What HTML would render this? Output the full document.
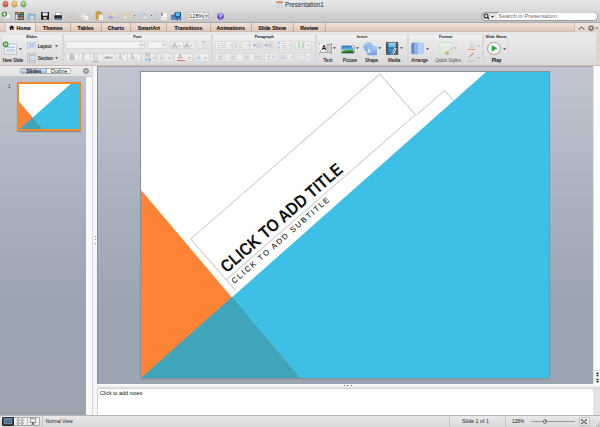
<!DOCTYPE html>
<html><head><meta charset="utf-8">
<style>
*{margin:0;padding:0;box-sizing:border-box}
html,body{width:600px;height:427px;overflow:hidden;background:#e4e4e4;font-family:"Liberation Sans",sans-serif;position:relative}
.a{position:absolute}
#top{left:0;top:0;width:600px;height:23.2px;background:linear-gradient(#e9e9e9,#d6d6d6 55%,#c4c4c4)}
#top:after{content:"";position:absolute;left:0;right:0;bottom:0;height:0.8px;background:#a8a8a8}
.tl{width:5.6px;height:5.6px;border-radius:50%;top:1.4px;box-shadow:0 0 0 0.4px rgba(0,0,0,.25)}
#tabs{left:0;top:23.2px;width:600px;height:8.8px;background:linear-gradient(#eee0d7,#dfcabe);border-bottom:0.5px solid #d2bcaf}
.tab{top:0;height:9px;font-size:5.2px;font-weight:bold;color:#111;text-align:center;line-height:10px;border-right:0.8px solid #c4aea2;-webkit-text-stroke:0.12px #111}
#rib{left:0;top:32px;width:597px;height:33px;background:linear-gradient(#e8e8e8,#dedede)}
#ribb{left:0;top:65px;width:600px;height:1px;background:#d5beb1}
.grp{top:1.5px;height:31px;border:0.6px solid #d9d9d9;border-top-color:#e4e4e4;border-radius:1px;background:linear-gradient(#e9e9e9 15%,#e4e4e4 45%,#dbdbdb)}
.glab{top:0;height:5.2px;width:100%;text-align:center;font-size:3.9px;font-weight:bold;line-height:3.1px;color:#1a1a1a;background:linear-gradient(#f2f2f2,#ececec)}
.lab{font-size:4.6px;color:#1a1a1a;white-space:nowrap;line-height:5px;-webkit-text-stroke:0.1px #1a1a1a}
.arr{width:2.6px;height:2px;border-top:2px solid #2a2a2a;clip-path:polygon(0 0,100% 0,50% 100%)}
.btn{border:0.6px solid #dcdcdc;border-radius:1px;background:linear-gradient(#f0f0f0,#e8e8e8)}
#lhead{left:0;top:66px;width:92px;height:10.5px;background:linear-gradient(#ececec,#e2e2e2);border-bottom:1px solid #c9c9c9}
#lpane{left:0;top:76.5px;width:86px;height:338px;background:linear-gradient(rgb(189,195,207) 0%,rgb(170,177,190) 36.5%,rgb(155,164,177) 67.6%,rgb(155,164,176) 100%)}
#lscroll{left:86px;top:76.5px;width:6px;height:338px;background:#fafafa}
#split{left:92px;top:66px;width:5px;height:349px;background:#f7f7f7;border-left:1px solid #d9d9d9}
#main{left:97px;top:66px;width:496px;height:318px;background:linear-gradient(rgb(192,197,209) 0%,rgb(170,177,190) 42%,rgb(155,164,177) 75%,rgb(155,164,177) 100%);border-left:1px solid #8a8f97;border-top:1px solid #9ea4ae}
#vscroll{left:593px;top:66px;width:7px;height:318px;background:#fbfbfb;border-left:1px solid #e2e2e2}
#nsplit{left:97px;top:384px;width:503px;height:4.6px;background:linear-gradient(#fdfdfd,#f2f2f2 50%,#dedede);border-bottom:0.6px solid #d4d4d4}
#notes{left:97px;top:388.6px;width:497px;height:27px;background:#fff;border-left:1px solid #cfcfcf;border-right:1px solid #e4e4e4}
#status{left:0;top:414.5px;width:600px;height:12.5px;background:linear-gradient(#e9e9e9,#d9d9d9);border-top:1px solid #b5b5b5}
#slide{left:141px;top:72px;width:408px;height:306px;background:#fff;box-shadow:0 0 0 1px #8a8f98, 0.5px 1px 1.5px rgba(0,0,0,.25)}
.ti{top:11px;width:9px;height:9px}
</style></head><body>

<!-- ===== title bar + toolbar ===== -->
<div id="top" class="a">
  <div class="a tl" style="left:2.7px;background:radial-gradient(circle at 50% 35%,#f59a90,#d2473e 60%,#a8332c)"></div>
  <div class="a tl" style="left:11.7px;background:radial-gradient(circle at 50% 35%,#f7dc9a,#d9a33a 60%,#a87a20)"></div>
  <div class="a tl" style="left:20.7px;background:radial-gradient(circle at 50% 35%,#bfe8a8,#68b04c 60%,#3f8430)"></div>
  <svg class="a" style="left:275.8px;top:1.2px" width="7.5" height="7"><rect x="0.4" y="0.4" width="6.6" height="6" rx="0.8" fill="#eef0f2" stroke="#b0a8a0" stroke-width="0.5"/><rect x="0.6" y="0.6" width="6.2" height="1.6" fill="#e07848"/><rect x="1.6" y="3" width="4.2" height="2.4" fill="#c8d4e0"/></svg>
  <div class="a" style="left:285px;top:0.7px;font-size:6.3px;color:#2a2a2a;line-height:8px">Presentation1</div>

  <!-- new -->
  <svg class="a" style="left:1px;top:10.5px" width="11" height="10">
    <path d="M2.2 2.2 H7.6 L9.4 4 V9.5 H2.2 Z" fill="#f6f6f6" stroke="#a8a8a8" stroke-width="0.5"/>
    <rect x="2.6" y="6.6" width="6.5" height="2.6" fill="#d4d4d4"/>
    <circle cx="3.5" cy="3.1" r="2.6" fill="#3d9a2e"/>
    <path d="M3.5 1.5 V4.7 M1.9 3.1 H5.1" stroke="#fff" stroke-width="0.9"/>
  </svg>
  <!-- templates -->
  <svg class="a" style="left:14.5px;top:11.8px" width="9" height="8">
    <rect x="0" y="0" width="9" height="8" fill="#3a3f47" stroke="#8a8a8a" stroke-width="0.4"/>
    <rect x="0.5" y="0.4" width="2.4" height="1.6" fill="#d8503a"/><rect x="3.1" y="0.4" width="2.4" height="1.6" fill="#e8a030"/><rect x="5.7" y="0.4" width="2.8" height="1.6" fill="#4a9a3a"/>
    <rect x="0.5" y="2.3" width="2.2" height="5.3" fill="#cfe2f2"/>
    <circle cx="4.2" cy="3.7" r="0.9" fill="#3ab0e8"/><circle cx="7" cy="3.7" r="0.9" fill="#5ad890"/>
    <rect x="3" y="5.4" width="5.4" height="1.5" fill="#f08a5a"/>
  </svg>
  <!-- open -->
  <svg class="a" style="left:27.3px;top:11.8px" width="9.5" height="8.5">
    <path d="M0.5 1.2 H3.5 L4.3 2 H9 V7.4 H0.5 Z" fill="#7fb0d6"/>
    <path d="M0.5 2.8 H9 V7.4 H0.5 Z" fill="#93c0e2"/>
    <path d="M5 8.3 V4.2 M3.8 5.4 L5 4.2 L6.2 5.4" stroke="#fff" stroke-width="0.9" fill="none"/>
  </svg>
  <!-- save -->
  <svg class="a" style="left:40.8px;top:11.8px" width="8.5" height="8">
    <rect x="0" y="0" width="8.2" height="7.8" rx="0.5" fill="#1c1c1c"/>
    <rect x="1.6" y="0.5" width="5" height="3.2" fill="#f2f2f2"/><rect x="1.6" y="0.5" width="5" height="0.7" fill="#5a7ab8"/>
    <rect x="2.3" y="5" width="3.6" height="2.6" fill="#b8b8b8"/>
  </svg>
  <!-- print -->
  <svg class="a" style="left:53.5px;top:11.5px" width="8.5" height="8.5">
    <rect x="1.5" y="0.5" width="5.5" height="3" fill="#f8f8f8" stroke="#888" stroke-width="0.4"/>
    <rect x="0.3" y="3.3" width="7.9" height="3.2" rx="0.6" fill="#2a2a2a"/>
    <rect x="0.8" y="6.3" width="6.9" height="1.8" fill="#6a6a6a"/>
    <rect x="2.2" y="6.6" width="4.2" height="1.4" fill="#3a8ad8"/>
  </svg>
  <div class="a" style="left:65.5px;top:11px;width:0.8px;height:10px;background:#cfcfcf"></div>
  <!-- cut (faded) -->
  <svg class="a" style="left:69px;top:12px" width="9" height="8"><path d="M2.5 0.5 L5.5 5 M6.5 0.5 L3.5 5" stroke="#c8c8c8" stroke-width="0.7" fill="none"/><circle cx="2.8" cy="6" r="1.3" fill="none" stroke="#e2c4bc" stroke-width="0.9"/><circle cx="6.2" cy="6" r="1.3" fill="none" stroke="#e2c4bc" stroke-width="0.9"/></svg>
  <!-- copy (faded) -->
  <svg class="a" style="left:81px;top:12.5px" width="9" height="8"><rect x="0.5" y="0.5" width="4.5" height="5" fill="#ececec" stroke="#d2d2d2" stroke-width="0.6"/><rect x="3" y="2.5" width="4.5" height="5" fill="#f0f0f0" stroke="#d2d2d2" stroke-width="0.6"/></svg>
  <!-- paste -->
  <svg class="a" style="left:94.5px;top:11px" width="10" height="10">
    <rect x="0.7" y="0.8" width="5.6" height="7.6" rx="0.5" fill="#c98a1c"/>
    <rect x="1.3" y="1.2" width="4.4" height="6.8" fill="#e0a22e"/>
    <rect x="2.2" y="0.2" width="2.6" height="1.3" fill="#9a9a9a"/>
    <rect x="3.6" y="3.6" width="5" height="5.8" fill="#f8f8f8" stroke="#a8a8a8" stroke-width="0.5"/>
    <path d="M4.6 5 H7.6 M4.6 6.3 H7.6 M4.6 7.6 H7" stroke="#ccc" stroke-width="0.4"/>
  </svg>
  <!-- format painter (faded) -->
  <svg class="a" style="left:107px;top:11.5px" width="10" height="9"><path d="M0.8 5.2 L4.8 7.6 L7.2 5.2 L3.2 3 Z" fill="#b0a8e0"/><path d="M3.2 3 L7.2 5.2 L8.5 2.2 L5.2 0.8 Z" fill="#ead9a8"/><path d="M5.2 0.8 L8.5 2.2" stroke="#e8e8e8" stroke-width="0.6"/></svg>
  <div class="a" style="left:119px;top:11px;width:0.8px;height:10px;background:#cfcfcf"></div>
  <!-- undo -->
  <svg class="a" style="left:122px;top:12px" width="10" height="8"><path d="M3.2 6.6 A3.7 2.9 0 1 1 8 6" stroke="#e6d49a" stroke-width="1.8" fill="none"/><path d="M2 4.6 L3.6 7.2 L5 5.4 Z" fill="#f2eef6"/></svg>
  <div class="a" style="left:133.7px;top:15px;width:1.4px;height:1.1px;background:#555"></div>
  <!-- redo -->
  <svg class="a" style="left:139.3px;top:12px" width="10" height="8"><path d="M6.8 6.6 A3.7 2.9 0 1 0 2 6" stroke="#b4cfe2" stroke-width="1.8" fill="none"/><path d="M8 4.6 L6.4 7.2 L5 5.4 Z" fill="#f2f6fa"/></svg>
  <div class="a" style="left:150.8px;top:15px;width:1.4px;height:1.1px;background:#555"></div>
  <div class="a" style="left:155px;top:11px;width:0.8px;height:10px;background:#cfcfcf"></div>
  <!-- new slide doc -->
  <svg class="a" style="left:159.5px;top:11.5px" width="8" height="9">
    <rect x="0.6" y="0.6" width="6.6" height="7.6" fill="#f6f6f6" stroke="#c4c4c4" stroke-width="0.5"/>
    <rect x="1" y="1" width="1.7" height="1.6" fill="#d8402c"/><rect x="1" y="2.8" width="1.7" height="1.4" fill="#6aa0d8"/>
    <rect x="1" y="5.2" width="5.8" height="2.6" fill="#e4e4e4"/>
  </svg>
  <!-- slideshow -->
  <svg class="a" style="left:170.5px;top:11.5px" width="11" height="9">
    <rect x="0.5" y="3" width="5" height="4.4" fill="#4a84d0" stroke="#2a5aa0" stroke-width="0.4"/>
    <rect x="3.6" y="0.4" width="6.4" height="4.2" fill="#1e2a34"/>
    <rect x="4.6" y="0.9" width="4.4" height="3.2" fill="#4cc0f0"/>
    <path d="M5.5 4.6 H9.8 V8.4 H8.6 V6.4 H7 V8.4 H5.5 Z" fill="#2050a8"/>
  </svg>
  <!-- zoom -->
  <div class="a" style="left:188px;top:12.2px;width:21px;height:7.5px;background:#fff;border:0.6px solid #c8c8c8"></div>
  <div class="a" style="left:203px;top:12.2px;width:6px;height:7.5px;background:linear-gradient(#eee,#d4d4d4);border:0.6px solid #c0c0c0"></div>
  <svg class="a" style="left:204.5px;top:15.1px" width="3" height="2.4"><path d="M0.2 0.2 H2.8 L1.5 2 Z" fill="#555"/></svg>
  <div class="a" style="left:189.3px;top:12.6px;font-size:5.5px;line-height:7px;color:#222">128%</div>
  <!-- help -->
  <svg class="a" style="left:215.5px;top:11.5px" width="9" height="9">
    <defs><radialGradient id="hlp" cx="0.5" cy="0.35" r="0.6"><stop offset="0" stop-color="#a08cff"/><stop offset="1" stop-color="#5330c4"/></radialGradient></defs>
    <circle cx="4.5" cy="4.4" r="4.1" fill="#eeeeee" stroke="#b8b8b8" stroke-width="0.4"/>
    <circle cx="4.5" cy="4.4" r="3.3" fill="url(#hlp)"/>
    <path d="M3.3 3.3 Q3.4 2.2 4.5 2.2 Q5.7 2.2 5.7 3.3 Q5.7 4 4.8 4.5 L4.6 5.3" stroke="#fff" stroke-width="0.8" fill="none"/>
    <circle cx="4.6" cy="6.4" r="0.45" fill="#fff"/>
  </svg>
  <!-- search -->
  <div class="a" style="left:480.5px;top:11.5px;width:117px;height:9px;border-radius:4.5px;background:linear-gradient(#d8d8d8,#f2f2f2);border:0.7px solid #9a9a9a"></div>
  <div class="a" style="left:496px;top:12.3px;width:101px;height:7.4px;border-radius:3.7px;background:#fff;box-shadow:inset 0 0.5px 1px rgba(0,0,0,.35)"></div>
  <svg class="a" style="left:483px;top:12.8px" width="12" height="7"><circle cx="3" cy="3" r="2" stroke="#222" stroke-width="1.1" fill="none"/><path d="M4.4 4.4 L6 6" stroke="#222" stroke-width="1.3"/><path d="M8 3 L11 3 L9.5 5 Z" fill="#333"/></svg>
  <div class="a" style="left:498.3px;top:13px;font-size:5.8px;line-height:7px;color:#6a6a6a">Search in Presentation</div>
</div>

<!-- ===== tabs ===== -->
<div id="tabs" class="a">
  <div class="a tab" style="left:4.75px;width:31.5px;background:linear-gradient(#f3eeeb,#ebe3de);border-left:1px solid #d4c6be"></div>
  <svg class="a" style="left:9.2px;top:2.2px" width="5.5" height="5"><path d="M2.75 0.2 L5.4 2.7 L4.6 2.7 L4.6 4.9 L3.3 4.9 L3.3 3.6 L2.2 3.6 L2.2 4.9 L0.9 4.9 L0.9 2.7 L0.1 2.7 Z" fill="#111"/></svg>
  <div class="a tab" style="left:16.5px;width:15px;border:none;text-align:left">Home</div>
  <div class="a tab" style="left:36.25px;width:34.35px">Themes</div>
  <div class="a tab" style="left:70.6px;width:31.1px">Tables</div>
  <div class="a tab" style="left:101.7px;width:29.6px">Charts</div>
  <div class="a tab" style="left:131.3px;width:36px">SmartArt</div>
  <div class="a tab" style="left:167.3px;width:43.3px">Transitions</div>
  <div class="a tab" style="left:210.6px;width:41.2px">Animations</div>
  <div class="a tab" style="left:251.8px;width:41.8px">Slide Show</div>
  <div class="a tab" style="left:293.6px;width:32.1px">Review</div>
  <div class="a" style="left:574px;top:0;width:26px;height:8.8px;background:linear-gradient(#f0e4dc,#e4d2c8);border-left:0.8px solid #d0bcb0"></div>
  <svg class="a" style="left:577.5px;top:2.6px" width="7" height="4.5"><path d="M0.7 3.6 L3.5 1 L6.3 3.6" stroke="#444" stroke-width="1" fill="none"/></svg>
  
  <svg class="a" style="left:588px;top:1.6px" width="12" height="7"><circle cx="3.2" cy="3.2" r="2.8" fill="none" stroke="#666" stroke-width="1" stroke-dasharray="0.9 0.8"/><circle cx="3.2" cy="3.2" r="1.7" fill="none" stroke="#666" stroke-width="1.1"/><path d="M7.6 2.6 L10 2.6 L8.8 4 Z" fill="#444"/></svg>
</div>

<!-- ===== ribbon ===== -->
<div id="rib" class="a">
  <div class="a grp" style="left:1px;width:61.5px"><div class="a glab">Slides</div></div>
  <div class="a grp" style="left:62.5px;width:149.8px"><div class="a glab">Font</div></div>
  <div class="a grp" style="left:212.3px;width:104px"><div class="a glab">Paragraph</div></div>
  <div class="a grp" style="left:316.3px;width:91.5px"><div class="a glab">Insert</div></div>
  <div class="a grp" style="left:407.8px;width:75.6px"><div class="a glab">Format</div></div>
  <div class="a grp" style="left:483.4px;width:25px"><div class="a glab">Slide Show</div></div>
  <div class="a grp" style="left:508.4px;width:88.6px;border-left:none"></div>
  
</div>
<div id="ribc" class="a" style="left:0;top:0;width:600px;height:66px">
  <!-- Slides group -->
  <svg class="a" style="left:2px;top:41.2px" width="16" height="14.5">
    <rect x="2.2" y="3" width="12.6" height="10.6" fill="#f6f6f6" stroke="#a8a8a8" stroke-width="0.6"/>
    <rect x="2.6" y="12.6" width="11.8" height="0.8" fill="#d0d0d0"/>
    <rect x="4" y="5.6" width="9.2" height="1" fill="#8fb3e6"/>
    <rect x="4" y="7.6" width="9.2" height="4" fill="#d2e2f6"/>
    <path d="M5 8.6 H12 M5 10.3 H12" stroke="#a4c0ea" stroke-width="0.5"/>
    <circle cx="3.6" cy="3.3" r="2.9" fill="#3b9a2c"/>
    <circle cx="3.6" cy="3.3" r="1.5" fill="#fff"/>
    <path d="M3.6 2.3 V4.3 M2.6 3.3 H4.6" stroke="#3b9a2c" stroke-width="0.6"/>
  </svg>
  <svg class="a" style="left:19.2px;top:47.8px" width="3" height="2.4"><path d="M0.2 0.2 H2.8 L1.5 2 Z" fill="#2a2a2a"/></svg>
  <div class="a lab" style="left:2.7px;top:57.8px;font-size:4.55px">New Slide</div>
  <svg class="a" style="left:26.5px;top:41.8px" width="9.5" height="7.5">
    <rect x="0.5" y="0.5" width="8.5" height="6.6" fill="#e4eefa" stroke="#a8b0bc" stroke-width="0.6"/>
    <rect x="1.6" y="1.6" width="6.3" height="4.4" fill="#c8dcf6"/>
    <path d="M2.2 2.6 H7.2" stroke="#7ea4dc" stroke-width="0.7"/>
    <path d="M2.2 4.2 H7.2 M2.2 5.3 H6" stroke="#a0bde6" stroke-width="0.5"/>
  </svg>
  <div class="a lab" style="left:37.7px;top:43.6px;font-size:4.6px">Layout</div>
  <svg class="a" style="left:54.8px;top:44.8px" width="3" height="2.4"><path d="M0.2 0.2 H2.8 L1.5 2 Z" fill="#2a2a2a"/></svg>
  <svg class="a" style="left:26.5px;top:52.6px" width="9.5" height="10">
    <path d="M0.5 2.2 V0.6 H9 V2.2" fill="none" stroke="#b4b4b4" stroke-width="0.9"/>
    <path d="M0.5 7.6 V9.3 H9 V7.6" fill="none" stroke="#b4b4b4" stroke-width="0.9"/>
    <path d="M0.5 2.2 V7.6" stroke="#c4c4c4" stroke-width="0.9"/>
    <rect x="2.4" y="2.6" width="6.6" height="4.8" fill="#c6daf4" stroke="#98a8c0" stroke-width="0.5"/>
    <path d="M3.4 4.2 H8" stroke="#eef4fc" stroke-width="0.8"/>
  </svg>
  <div class="a lab" style="left:37.7px;top:55.5px;font-size:4.6px">Section</div>
  <svg class="a" style="left:54.8px;top:57.0px" width="3" height="2.4"><path d="M0.2 0.2 H2.8 L1.5 2 Z" fill="#2a2a2a"/></svg>

  <!-- Font group -->
  <div class="a" style="left:65.3px;top:41.3px;width:80px;height:7.5px;border:0.6px solid #dadada;background:#f1f1f1"></div>
  <div class="a" style="left:139.5px;top:41.3px;width:5.8px;height:7.5px;border-left:0.6px solid #dadada"></div>
  <svg class="a" style="left:141.0px;top:44.4px" width="3" height="2.4"><path d="M0.2 0.2 H2.8 L1.5 2 Z" fill="#aaa"/></svg>
  <div class="a" style="left:147px;top:41.3px;width:20.3px;height:7.5px;border:0.6px solid #dadada;background:#f1f1f1"></div>
  <div class="a" style="left:161.5px;top:41.3px;width:5.8px;height:7.5px;border-left:0.6px solid #dadada"></div>
  <svg class="a" style="left:163.0px;top:44.4px" width="3" height="2.4"><path d="M0.2 0.2 H2.8 L1.5 2 Z" fill="#aaa"/></svg>
  <div class="a btn" style="left:169.5px;top:41.3px;width:26.5px;height:7.5px"></div>
  <div class="a" style="left:182.7px;top:41.3px;width:0.6px;height:7.5px;background:#dadada"></div>
  <svg class="a" style="left:170px;top:41.5px" width="26" height="7.5">
    <path d="M2 6.6 L4.6 0.8 L7.2 6.6 M3.1 4.4 H6.1" stroke="#a4a4a4" stroke-width="0.8" fill="none"/>
    <path d="M7.8 4.4 L9.1 2.8 L10.4 4.4 Z" fill="#8fb0dc"/>
    <path d="M14.2 6.6 L16.8 0.8 L19.4 6.6 M15.3 4.4 H18.3" stroke="#a4a4a4" stroke-width="0.8" fill="none"/>
    <path d="M20 3.2 L21.3 4.8 L22.6 3.2 Z" fill="#8fb0dc"/>
  </svg>
  <div class="a btn" style="left:197.5px;top:41.3px;width:12px;height:7.5px"></div>
  <svg class="a" style="left:198.5px;top:41.3px" width="10" height="8">
    <path d="M3 1.2 L5 0.4 L5.6 2" stroke="#9a9a9a" stroke-width="0.6" fill="none"/>
    <path d="M2.6 3.6 L6 1.6 L9 4.6 L5.6 7 Z" fill="#f0f0f4" stroke="#b4b4b8" stroke-width="0.5"/>
    <path d="M4.2 5.4 L7.4 3.2" stroke="#c8c8cc" stroke-width="0.5"/>
  </svg>

  <div class="a btn" style="left:65.5px;top:53.4px;width:75px;height:8.6px"></div>
  <div class="a" style="left:77.5px;top:53.4px;width:0.6px;height:8.6px;background:#dadada"></div>
  <div class="a" style="left:89.5px;top:53.4px;width:0.6px;height:8.6px;background:#dadada"></div>
  <div class="a" style="left:102.5px;top:53.4px;width:0.6px;height:8.6px;background:#dadada"></div>
  <div class="a" style="left:114.5px;top:53.4px;width:0.6px;height:8.6px;background:#dadada"></div>
  <div class="a" style="left:127px;top:53.4px;width:0.6px;height:8.6px;background:#dadada"></div>
  <div class="a" style="left:69.2px;top:53.8px;font-family:'Liberation Serif';font-size:8px;line-height:8px;color:#a8a8a8;font-weight:bold">B</div>
  <div class="a" style="left:81.6px;top:53.8px;font-family:'Liberation Serif';font-size:8px;line-height:8px;color:#a8a8a8;font-style:italic">I</div>
  <div class="a" style="left:92.8px;top:53.6px;font-family:'Liberation Serif';font-size:8px;line-height:8px;color:#a8a8a8;text-decoration:underline">U</div>
  <div class="a" style="left:104.5px;top:55.5px;font-size:3.6px;line-height:4px;color:#999">ABC</div>
  <div class="a" style="left:105px;top:57.4px;width:7.5px;height:0.5px;background:#aaa"></div>
  <div class="a" style="left:117.5px;top:53.8px;font-family:'Liberation Serif';font-size:7.5px;line-height:8px;color:#a8a8a8">A</div>
  <div class="a" style="left:123.3px;top:53.6px;font-size:3px;line-height:3px;color:#8fb0dc">1</div>
  <div class="a" style="left:129.5px;top:53.8px;font-family:'Liberation Serif';font-size:7.5px;line-height:8px;color:#a8a8a8">A</div>
  <div class="a" style="left:135.3px;top:58.5px;font-size:3px;line-height:3px;color:#8fb0dc">2</div>
  <div class="a btn" style="left:142px;top:53.4px;width:13.5px;height:8.6px"></div>
  <div class="a" style="left:144.5px;top:53.6px;font-size:4.5px;line-height:4.5px;color:#aaa;font-weight:bold">AV</div>
  <div class="a" style="left:144.5px;top:58.3px;width:2.5px;height:2.5px;border-radius:50%;background:#8fb6e0"></div>
  <div class="a" style="left:148.3px;top:58.3px;width:2.5px;height:2.5px;border-radius:50%;background:#8fb6e0"></div>
  <svg class="a" style="left:151.8px;top:57.2px" width="3" height="2.4"><path d="M0.2 0.2 H2.8 L1.5 2 Z" fill="#aaa"/></svg>
  <div class="a btn" style="left:157px;top:53.4px;width:15.5px;height:8.6px"></div>
  <div class="a" style="left:159.5px;top:53.8px;font-size:7px;line-height:8px;color:#b8c4d4">A</div>
  <svg class="a" style="left:168.4px;top:57.2px" width="3" height="2.4"><path d="M0.2 0.2 H2.8 L1.5 2 Z" fill="#aaa"/></svg>
  <div class="a btn" style="left:174px;top:53.4px;width:18.5px;height:8.6px"></div>
  <div class="a" style="left:177.8px;top:53.4px;font-size:7px;line-height:8px;color:#a0a0a0">A</div>
  <div class="a" style="left:177px;top:60.3px;width:8px;height:1.2px;background:#e86868"></div>
  <svg class="a" style="left:188.4px;top:57.2px" width="3" height="2.4"><path d="M0.2 0.2 H2.8 L1.5 2 Z" fill="#aaa"/></svg>
  <div class="a btn" style="left:193.5px;top:53.4px;width:15.5px;height:8.6px"></div>
  <div class="a" style="left:195.8px;top:53.6px;font-size:7px;line-height:8px;color:#7fd6d6">A</div>
  <svg class="a" style="left:203.8px;top:57.2px" width="3" height="2.4"><path d="M0.2 0.2 H2.8 L1.5 2 Z" fill="#aaa"/></svg>

  <!-- Paragraph group -->
  <div class="a btn" style="left:214.5px;top:41.3px;width:18px;height:8.4px"></div>
  <div class="a btn" style="left:232.5px;top:41.3px;width:17px;height:8.4px"></div>
  <div class="a btn" style="left:250px;top:41.3px;width:12px;height:8.4px"></div>
  <div class="a btn" style="left:263px;top:41.3px;width:12px;height:8.4px"></div>
  <div class="a btn" style="left:276.5px;top:41.3px;width:15px;height:8.4px"></div>
  <div class="a btn" style="left:294.5px;top:41.3px;width:17.5px;height:8.4px"></div>
  <svg class="a" style="left:214.5px;top:41.3px" width="100" height="9">
    <g fill="#9fbfe0"><circle cx="3.5" cy="2.5" r="0.6"/><circle cx="3.5" cy="4.5" r="0.6"/><circle cx="3.5" cy="6.5" r="0.6"/><rect x="20.5" y="2" width="1" height="5"/><circle cx="39.5" cy="4.2" r="1.6"/><circle cx="51" cy="4.2" r="1.6"/><path d="M64 1 L65.5 3 L62.5 3 Z M64 7.5 L65.5 5.5 L62.5 5.5 Z"/></g>
    <g stroke="#c4c4c4" stroke-width="0.6"><path d="M5 2.5 H11 M5 4.5 H11 M5 6.5 H11 M23 2.5 H28 M23 4.5 H28 M23 6.5 H28 M67 2.5 H72 M67 4.5 H72 M67 6.5 H72"/></g>
    <rect x="41" y="1.5" width="5.5" height="5.5" fill="#d4d4d4"/><rect x="52.5" y="1.5" width="5.5" height="5.5" fill="#d4d4d4"/>
    <rect x="83" y="1.5" width="2.2" height="6" fill="#b8dcb8"/><rect x="87" y="1.5" width="2.2" height="6" fill="#b8dcb8"/>
    <path d="M15 3.7 L17 3.7 L16 4.9 Z M32 3.7 L34 3.7 L33 4.9 Z M74 3.7 L76 3.7 L75 4.9 Z M92.5 3.7 L94.5 3.7 L93.5 4.9 Z" fill="#aaa"/>
  </svg>
  <div class="a btn" style="left:214.5px;top:53.4px;width:49px;height:8.6px"></div>
  <div class="a btn" style="left:264px;top:53.4px;width:12.5px;height:8.6px"></div>
  <div class="a btn" style="left:278.5px;top:53.4px;width:15px;height:8.6px"></div>
  <div class="a btn" style="left:296px;top:53.4px;width:16px;height:8.6px"></div>
  <svg class="a" style="left:214.5px;top:53.4px" width="100" height="9">
    <g stroke="#c6c6c6" stroke-width="0.7"><path d="M3 2 H10 M3 3.5 H8 M3 5 H10 M3 6.5 H8 M15 2 H22 M16 3.5 H21 M15 5 H22 M16 6.5 H21 M27 2 H34 M29 3.5 H34 M27 5 H34 M29 6.5 H34 M39 2 H47 M39 3.5 H47 M39 5 H47 M39 6.5 H47 M52 6.5 H60"/></g>
    <g fill="#9fbfe0"><path d="M52 3.5 L54.5 2 L54.5 5 Z M60 3.5 L57.5 2 L57.5 5 Z"/></g>
    <g stroke="#b0b0b0" stroke-width="0.6"><path d="M66 1.5 V7 M68 1.5 V7 M70.5 1.5 L69 7 M70.5 1.5 L72 7"/></g>
    <rect x="84" y="2" width="7" height="5.5" fill="#dde8f4" stroke="#c8c8c8" stroke-width="0.5"/>
    <path d="M75.5 3.7 L77.5 3.7 L76.5 4.9 Z M92.5 3.7 L94.5 3.7 L93.5 4.9 Z" fill="#aaa"/>
  </svg>

  <!-- Insert group -->
  <div class="a" style="left:319.5px;top:43.5px;width:12.2px;height:9.9px;background:linear-gradient(90deg,#fafafa 0%,#e6e6e6 45%,#c4c4c4 50%,#cfcfcf 100%);border:0.5px solid #a8a8a8"></div>
  <div class="a" style="left:320.2px;top:44.2px;width:6px;height:5.5px;background:#fdfdfd"></div>
  <div class="a" style="left:321.6px;top:43.8px;font-size:6.6px;font-weight:bold;line-height:7.5px;color:#111">A</div>
  <div class="a" style="left:318.7px;top:42.7px;width:1.7px;height:1.7px;border-radius:50%;background:#4b6ff0"></div>
  <div class="a" style="left:330.8px;top:42.7px;width:1.7px;height:1.7px;border-radius:50%;background:#4b6ff0"></div>
  <div class="a" style="left:318.7px;top:52.5px;width:1.7px;height:1.7px;border-radius:50%;background:#4b6ff0"></div>
  <div class="a" style="left:330.8px;top:52.5px;width:1.7px;height:1.7px;border-radius:50%;background:#4b6ff0"></div>
  <svg class="a" style="left:333.1px;top:47.4px" width="3" height="2.4"><path d="M0.2 0.2 H2.8 L1.5 2 Z" fill="#2a2a2a"/></svg>
  <div class="a lab" style="left:323.3px;top:58.0px;font-size:4.9px">Text</div>
  <div class="a" style="left:341px;top:44.5px;width:13.8px;height:9.7px;border:0.5px solid #b0b0b0;border-radius:1.2px;background:linear-gradient(#f6f6f6,#dcdcdc)"></div>
  <svg class="a" style="left:342.2px;top:45.6px" width="11.5" height="7.6">
    <defs><linearGradient id="sky" x1="0" y1="0" x2="0" y2="1"><stop offset="0" stop-color="#1f70c0"/><stop offset="0.45" stop-color="#6ab8ea"/><stop offset="0.6" stop-color="#eef6f6"/></linearGradient></defs>
    <rect width="11.5" height="7.6" fill="url(#sky)"/>
    <path d="M0 5 Q4 3.6 11.5 3.8 V7.6 H0 Z" fill="#3f9a34"/>
    <path d="M0 6.2 Q5 5 11.5 5.6 V7.6 H0 Z" fill="#1c5e22"/>
    <rect y="6.8" width="11.5" height="0.8" fill="#1a4f8a"/>
    <path d="M9 0 H11.5 V2.4 Z" fill="#f4f4f4"/>
  </svg>
  <svg class="a" style="left:355.8px;top:47.4px" width="3" height="2.4"><path d="M0.2 0.2 H2.8 L1.5 2 Z" fill="#2a2a2a"/></svg>
  <div class="a lab" style="left:342.8px;top:58.0px;font-size:4.6px">Picture</div>
  <svg class="a" style="left:362.5px;top:42px" width="14.5" height="13.5">
    <defs><linearGradient id="shp" x1="0" y1="0" x2="0" y2="1"><stop offset="0" stop-color="#a9cdf4"/><stop offset="1" stop-color="#6d9fe2"/></linearGradient></defs>
    <circle cx="5.3" cy="5" r="4.6" fill="url(#shp)" stroke="#7aa6de" stroke-width="0.4"/>
    <rect x="4.2" y="4.4" width="9.6" height="8.6" rx="0.8" fill="url(#shp)" stroke="#6a98d8" stroke-width="0.4" opacity="0.95"/>
    <path d="M4.8 6.2 L8 9.2 L6.6 9.4 L7.4 11 L6.8 11.3 L6 9.7 L5 10.6 Z" fill="#fff" opacity="0.85"/>
  </svg>
  <svg class="a" style="left:377.8px;top:47.4px" width="3" height="2.4"><path d="M0.2 0.2 H2.8 L1.5 2 Z" fill="#2a2a2a"/></svg>
  <div class="a lab" style="left:365px;top:58.0px;font-size:4.5px">Shape</div>
  <svg class="a" style="left:386px;top:41.8px" width="12.5" height="13">
    <rect x="0" y="0" width="12.2" height="12.8" rx="0.5" fill="#3c3c3c"/>
    <g fill="#8a8a8a"><rect x="0.6" y="1" width="1.2" height="1.3"/><rect x="0.6" y="3.6" width="1.2" height="1.3"/><rect x="0.6" y="6.2" width="1.2" height="1.3"/><rect x="0.6" y="8.8" width="1.2" height="1.3"/><rect x="0.6" y="11.1" width="1.2" height="1.2"/>
    <rect x="10.4" y="1" width="1.2" height="1.3"/><rect x="10.4" y="3.6" width="1.2" height="1.3"/><rect x="10.4" y="6.2" width="1.2" height="1.3"/><rect x="10.4" y="8.8" width="1.2" height="1.3"/><rect x="10.4" y="11.1" width="1.2" height="1.2"/></g>
    <defs><linearGradient id="med" x1="0" y1="0" x2="0" y2="1"><stop offset="0" stop-color="#a8e0ff"/><stop offset="0.5" stop-color="#3aa4ec"/><stop offset="1" stop-color="#1a6ec0"/></linearGradient></defs>
    <rect x="2.3" y="0.6" width="7.6" height="11.6" fill="url(#med)"/>
    <rect x="2.3" y="5.6" width="7.6" height="0.9" fill="#3c3c3c"/>
    <path d="M5.2 12.2 L8.6 5.4 L10.6 6.6 L8 12.2 Z" fill="#e8e8e8"/>
    <path d="M6.4 12 L9.2 6.6" stroke="#333" stroke-width="0.7"/>
  </svg>
  <svg class="a" style="left:399.8px;top:47.4px" width="3" height="2.4"><path d="M0.2 0.2 H2.8 L1.5 2 Z" fill="#2a2a2a"/></svg>
  <div class="a lab" style="left:388px;top:58.0px;font-size:4.5px">Media</div>

  <!-- Format group -->
  <svg class="a" style="left:411px;top:42.2px" width="14" height="13">
    <path d="M0.3 1.2 L3.6 0.4 V12.4 L0.3 11.6 Z" fill="#5b86d6"/>
    <path d="M3.6 0.4 L6.6 0.6 V12.3 L3.6 12.4 Z" fill="#8db2ee"/>
    <path d="M6.6 0.6 L13 1 V11.8 L6.6 12.3 Z" fill="#b3cdf4"/>
    <path d="M6.6 0.6 V12.3" stroke="#6d94d8" stroke-width="0.6"/>
    <path d="M8 2 V11" stroke="#d4e2f8" stroke-width="0.6"/>
  </svg>
  <svg class="a" style="left:425.8px;top:47.8px" width="3" height="2.4"><path d="M0.2 0.2 H2.8 L1.5 2 Z" fill="#2a2a2a"/></svg>
  <div class="a lab" style="left:411.3px;top:58.1px;font-size:4.7px">Arrange</div>
  <div class="a" style="left:439.2px;top:41.7px;width:12.6px;height:13px;border-radius:2.5px;background:linear-gradient(#e6f4e6,#d2ead4);border:0.5px solid #d0e2d2"></div>
  <svg class="a" style="left:444px;top:47px" width="10" height="8"><path d="M9 0.5 L4 5" stroke="#b0b0b0" stroke-width="0.7"/><path d="M2 4.5 L4.5 4 L5 6.5 L1 7.5 Z" fill="#f0a868"/><path d="M1 7.5 L5 6.5 L4.5 7.8 Z" fill="#88aee0"/></svg>
  <svg class="a" style="left:454.3px;top:47.4px" width="3" height="2.4"><path d="M0.2 0.2 H2.8 L1.5 2 Z" fill="#999"/></svg>
  <div class="a lab" style="left:435px;top:58.1px;font-size:4.7px;color:#9a9a9a">Quick Styles</div>
  <svg class="a" style="left:466.5px;top:41.5px" width="9" height="8.5"><path d="M2 4 L4.5 1.5 L7.5 4.5 L5 7 Z" fill="#c8d8ec"/><path d="M3.5 0.5 L4.5 1.5" stroke="#8aa" stroke-width="0.6"/><rect x="0.5" y="7" width="8" height="1.3" fill="#f4a070"/></svg>
  <svg class="a" style="left:476.8px;top:44.6px" width="3" height="2.4"><path d="M0.2 0.2 H2.8 L1.5 2 Z" fill="#aaa"/></svg>
  <svg class="a" style="left:466.5px;top:52px" width="9" height="10"><path d="M1.5 6 L7 0.8" stroke="#e0a070" stroke-width="1"/><path d="M3.5 4 L7 0.8" stroke="#e08888" stroke-width="1"/><rect x="0.5" y="8.5" width="8" height="0.9" fill="#b8b8b8"/></svg>
  <svg class="a" style="left:476.8px;top:56.8px" width="3" height="2.4"><path d="M0.2 0.2 H2.8 L1.5 2 Z" fill="#aaa"/></svg>

  <!-- Slide Show group -->
  <div class="a" style="left:487px;top:41.6px;width:13.5px;height:13.5px;border-radius:50%;background:radial-gradient(circle at 50% 30%,#ffffff,#e8e8e8);border:0.8px solid #a0a0a0"></div>
  <svg class="a" style="left:491px;top:44.8px" width="7" height="7"><path d="M0.7 0.2 L6.4 3.3 L0.7 6.6 Z" fill="#1fae34"/></svg>
  <svg class="a" style="left:502.5px;top:47.6px" width="3" height="2.4"><path d="M0.2 0.2 H2.8 L1.5 2 Z" fill="#2a2a2a"/></svg>
  <div class="a lab" style="left:491.8px;top:58.1px;font-size:4.6px;font-weight:bold">Play</div>
</div>
<div class="a" style="left:597px;top:32px;width:3px;height:33.5px;background:linear-gradient(90deg,#ddd0c8,#e6d6cc)"></div>
<div id="ribb" class="a"></div>

<!-- ===== left pane ===== -->
<div id="lhead" class="a">
  <div class="a" style="left:20.3px;top:1.6px;width:50.7px;height:6.9px;border:0.6px solid #a8a8a8;border-radius:1.8px;background:#fff;overflow:hidden">
    <div class="a" style="left:0;top:0;width:25.5px;height:100%;background:linear-gradient(#cfe6fb,#8fc1ef);border-right:0.7px solid #8aa"></div>
    <div class="a" style="left:5px;top:-0.5px;font-size:5.1px;line-height:6px;font-weight:bold;color:#111">Slides</div>
    <div class="a" style="left:29.2px;top:-0.5px;font-size:5.35px;line-height:6px;color:#111">Outline</div>
  </div>
  <div class="a" style="left:83.3px;top:1.7px;width:6px;height:6px;border-radius:50%;border:0.5px solid #8a8a8a;background:#a2a2a2"></div>
  <svg class="a" style="left:83.3px;top:1.7px" width="6" height="6"><path d="M2.1 2.1 L3.9 3.9 M3.9 2.1 L2.1 3.9" stroke="#dedede" stroke-width="0.6"/></svg>
</div>
<div id="lpane" class="a">
  <div class="a" style="left:8px;top:7.5px;font-size:4.8px;color:#444">1</div>
  <div class="a" style="left:17px;top:5.5px;width:64px;height:48.5px;border-radius:1.5px;background:#f08a2a;box-shadow:0 0.5px 1px rgba(0,0,0,.3)">
    <svg class="a" style="left:1.5px;top:1.5px" width="61" height="45.5" viewBox="0 0 408 306" preserveAspectRatio="none">
      <rect width="408" height="306" fill="#fff"/>
      <polygon points="345,0 408,0 408,306 0,306" fill="#3dbfe6"/>
      <polygon points="0,118 159,306 0,306" fill="#fd8336"/>
      <polygon points="91,225 0,306 159,306" fill="#3fa5bb"/>
    </svg>
  </div>
</div>
<div id="lscroll" class="a"></div>
<div id="split" class="a">
  <div class="a" style="left:1.5px;top:170px;width:1.2px;height:1.2px;border-radius:50%;background:#666"></div>
  <div class="a" style="left:1.5px;top:173.2px;width:1.2px;height:1.2px;border-radius:50%;background:#666"></div>
  <div class="a" style="left:1.5px;top:176.5px;width:1.2px;height:1.2px;border-radius:50%;background:#666"></div>
</div>

<!-- ===== main ===== -->
<div id="main" class="a"></div>
<div id="vscroll" class="a">
  <div class="a" style="left:0;top:304px;width:7px;height:1px;background:#d8d8d8"></div>
  <svg class="a" style="left:1px;top:305px" width="5" height="13"><path d="M2.5 1 L4.2 3 L0.8 3 Z M2.5 3.2 L4.2 5.2 L0.8 5.2 Z" fill="#3a3a3a"/><path d="M2.5 12 L4.2 10 L0.8 10 Z M2.5 9.8 L4.2 7.8 L0.8 7.8 Z" fill="#3a3a3a"/></svg>
</div>
<div id="nsplit" class="a">
  <div class="a" style="left:246.7px;top:1.3px;width:1.1px;height:1.1px;background:#666"></div>
  <div class="a" style="left:250px;top:1.3px;width:1.1px;height:1.1px;background:#666"></div>
  <div class="a" style="left:253.7px;top:1.3px;width:1.1px;height:1.1px;background:#666"></div>
</div>
<div id="notes" class="a"><div class="a" style="left:2px;top:1.7px;font-size:5.35px;line-height:6px;color:#111">Click to add notes</div></div>

<!-- ===== status ===== -->
<div id="status" class="a">
  <div class="a" style="left:1.5px;top:1px;width:38px;height:9.5px;border:0.6px solid #a8a8a8;border-radius:1px;background:linear-gradient(#fbfbfb,#e8e8e8)"></div>
  <div class="a" style="left:1.5px;top:1px;width:12.3px;height:9.5px;background:linear-gradient(#4c525a,#3a3e44);border:0.7px solid #2a2a2a;border-radius:1px"></div>
  <div class="a" style="left:3.8px;top:2.8px;width:7.8px;height:5.8px;background:linear-gradient(#587c9e,#46698c);border:0.4px solid #6d8aa0"></div>
  <div class="a" style="left:26.5px;top:1px;width:0.6px;height:9.5px;background:#b8b8b8"></div>
  <svg class="a" style="left:16.3px;top:2.3px" width="8.5" height="7"><g fill="none" stroke="#6a6a6a" stroke-width="0.6"><circle cx="2.2" cy="1.9" r="1.2"/><circle cx="6.2" cy="1.9" r="1.2"/><circle cx="2.2" cy="5.2" r="1.2"/><circle cx="6.2" cy="5.2" r="1.2"/></g></svg>
  <svg class="a" style="left:29.3px;top:2.3px" width="8" height="7"><g fill="none" stroke="#555" stroke-width="0.6"><rect x="1.2" y="0.8" width="5.6" height="3.8"/></g><path d="M3.2 4.6 L4 6.2 L4.8 4.6 Z M2.4 6.4 H5.6" stroke="#555" stroke-width="0.6" fill="#555"/></svg>
  <div class="a" style="left:42px;top:0;width:1px;height:11.5px;background:#c4c4c4"></div>
  <div class="a" style="left:45.5px;top:3px;font-size:4.8px;line-height:5px;color:#222">Normal View</div>
  <div class="a" style="left:448.5px;top:0;width:1px;height:11.5px;background:#c4c4c4"></div>
  <div class="a" style="left:462px;top:3px;font-size:5.4px;line-height:5.5px;color:#2a2a2a">Slide 1 of 1</div>
  <div class="a" style="left:505px;top:0;width:1px;height:11.5px;background:#c4c4c4"></div>
  <div class="a" style="left:512px;top:3px;font-size:4.8px;line-height:5px;color:#222">128%</div>
  <div class="a" style="left:530.5px;top:5.5px;width:44.5px;height:1.2px;background:#9a9a9a;border-radius:1px"></div>
  <div class="a" style="left:542.7px;top:3.4px;width:4.8px;height:4.8px;border-radius:50%;background:linear-gradient(#fafafa,#d8d8d8);border:0.6px solid #808080"></div>
  <div class="a" style="left:544.6px;top:4.6px;width:1px;height:2.4px;background:#666"></div>
  <div class="a" style="left:579px;top:1.6px;width:10.5px;height:8.6px;border:0.6px solid #c4c4c4;border-radius:1px;background:linear-gradient(#f4f4f4,#e0e0e0)"></div>
  <svg class="a" style="left:581.2px;top:3.3px" width="6" height="5.4"><path d="M1 1 L5 4.4 M5 1 L1 4.4" stroke="#2a2a2a" stroke-width="0.8"/><path d="M0.2 0.2 H2.2 L0.2 2 Z M5.8 0.2 H3.8 L5.8 2 Z M0.2 5.2 H2.2 L0.2 3.4 Z M5.8 5.2 H3.8 L5.8 3.4 Z" fill="#2a2a2a"/></svg>
  <svg class="a" style="left:594px;top:6px" width="6" height="6"><path d="M1 6 L6 1 M3 6 L6 3 M5 6 L6 5" stroke="#999" stroke-width="0.6"/></svg>
</div>

<!-- ===== slide ===== -->
<div id="slide" class="a">
<svg width="408" height="306" style="position:absolute;left:0;top:0">
  <polygon points="345,0 408,0 408,306 0,306" fill="#3dbfe6"/>
  <polygon points="0,118 159,306 0,306" fill="#fd8336"/>
  <polygon points="91,225 0,306 159,306" fill="#3fa5bb"/>
</svg>
<div class="a" style="left:49.1px;top:166.6px;width:0;height:0;transform-origin:0 0;transform:rotate(-41.1deg)">
  <div class="a" style="left:0;top:0;width:252.3px;height:54.5px;border:0.5px solid #cdcdcd"></div>
  <div class="a" style="left:0;top:54.5px;width:290px;height:14.6px;border:0.5px solid #cdcdcd;border-top:none;border-bottom:none"></div>
  <div class="a" style="left:252.3px;top:54.5px;width:37.7px;height:0.5px;background:#cdcdcd"></div>
  <div class="a" style="left:5.1px;top:34.5px;font-size:17.3px;line-height:18px;font-weight:bold;color:#111;white-space:nowrap;transform-origin:0 50%;transform:scaleX(0.887)">CLICK TO ADD TITLE</div>
  <div class="a" style="left:3.8px;top:57.3px;font-size:7.6px;line-height:8px;letter-spacing:1.78px;color:#222;white-space:nowrap;-webkit-text-stroke:0.15px #333">CLICK TO ADD SUBTITLE</div>
</div>
</div>
</body></html>
